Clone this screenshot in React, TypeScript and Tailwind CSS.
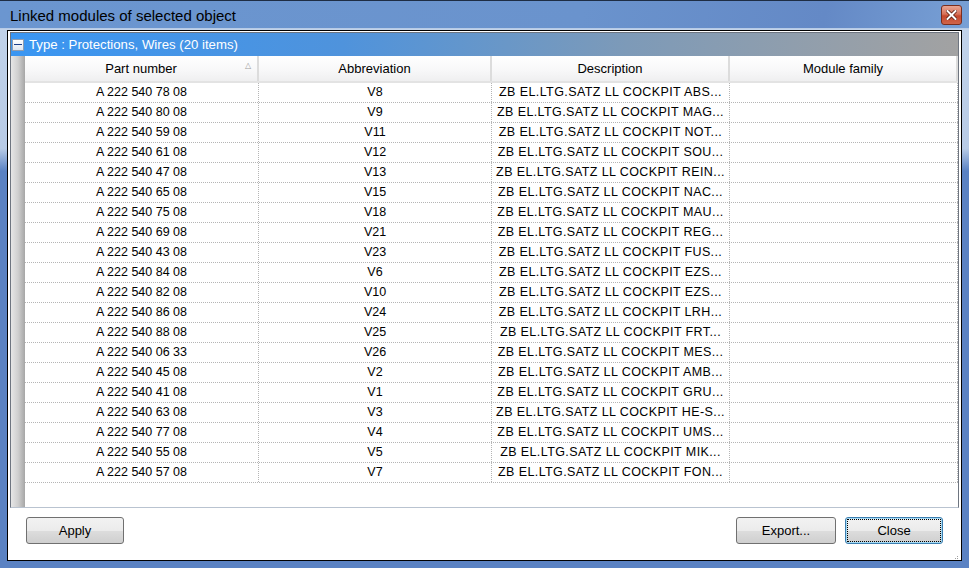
import React from "react";

type Row = { part: string; abbr: string; desc: string };

const rows: Row[] = [
  { part: "A 222 540 78 08", abbr: "V8", desc: "ABS..." },
  { part: "A 222 540 80 08", abbr: "V9", desc: "MAG..." },
  { part: "A 222 540 59 08", abbr: "V11", desc: "NOT..." },
  { part: "A 222 540 61 08", abbr: "V12", desc: "SOU..." },
  { part: "A 222 540 47 08", abbr: "V13", desc: "REIN..." },
  { part: "A 222 540 65 08", abbr: "V15", desc: "NAC..." },
  { part: "A 222 540 75 08", abbr: "V18", desc: "MAU..." },
  { part: "A 222 540 69 08", abbr: "V21", desc: "REG..." },
  { part: "A 222 540 43 08", abbr: "V23", desc: "FUS..." },
  { part: "A 222 540 84 08", abbr: "V6", desc: "EZS..." },
  { part: "A 222 540 82 08", abbr: "V10", desc: "EZS..." },
  { part: "A 222 540 86 08", abbr: "V24", desc: "LRH..." },
  { part: "A 222 540 88 08", abbr: "V25", desc: "FRT..." },
  { part: "A 222 540 06 33", abbr: "V26", desc: "MES..." },
  { part: "A 222 540 45 08", abbr: "V2", desc: "AMB..." },
  { part: "A 222 540 41 08", abbr: "V1", desc: "GRU..." },
  { part: "A 222 540 63 08", abbr: "V3", desc: "HE-S..." },
  { part: "A 222 540 77 08", abbr: "V4", desc: "UMS..." },
  { part: "A 222 540 55 08", abbr: "V5", desc: "MIK..." },
  { part: "A 222 540 57 08", abbr: "V7", desc: "FON..." },
];

const cols = "grid grid-cols-[234px_233px_238px_228px]";

function Button({ label, focused, width }: { label: string; focused?: boolean; width: string }) {
  return (
    <div
      className={`${width} h-[27px] rounded-[3px] border ${
        focused ? "border-[#3c7fb1] shadow-[inset_0_0_0_1px_#a6dbf5]" : "border-[#707070]"
      } bg-[linear-gradient(#f2f2f2_0%,#ebebeb_50%,#dddddd_51%,#cfcfcf_100%)] p-[2px]`}
    >
      <div
        className={`h-full w-full flex items-center justify-center text-[13px] text-black ${
          focused ? "outline outline-1 outline-dotted outline-black" : ""
        }`}
      >
        {label}
      </div>
    </div>
  );
}

export default function App() {
  return (
    <div
      className="w-[969px] h-[568px] flex flex-col border-t border-[#1e2d44] bg-[linear-gradient(#c3d4ea_0%,#b8cbe6_26%,#5a82c3_30%,#5a82c3_100%)] overflow-hidden"
      style={{ fontFamily: '"Liberation Sans", Arial, sans-serif' }}
    >
      {/* title bar */}
      <div className="h-[28px] shrink-0 flex items-center justify-between pl-[10px] pr-[7px] bg-[linear-gradient(100deg,#6b96d0_0%,#6a93cd_60%,#6489c6_85%,#78a0d5_100%)] border-b border-[#b7cbe6]">
        <span className="text-[15px] text-black leading-none pt-[2px]">Linked modules of selected object</span>
        <div className="w-[21px] h-[20px] rounded-[3px] border border-[#7a2e1e] bg-[linear-gradient(#e8a593_0%,#d8735a_45%,#c5472c_55%,#d0654a_100%)] flex items-center justify-center">
          <svg width="11" height="10" viewBox="0 0 11 10">
            <path d="M1.5 1 L9.5 9 M9.5 1 L1.5 9" stroke="#5a1d10" strokeWidth="3.6" strokeLinecap="square" />
            <path d="M1.5 1 L9.5 9 M9.5 1 L1.5 9" stroke="#ffffff" strokeWidth="2" strokeLinecap="square" />
          </svg>
        </div>
      </div>

      {/* client area */}
      <div className="mx-[7px] mt-[1px] h-[531px] border border-black bg-white flex flex-col px-[2px] pt-[1px]">
        {/* grid */}
        <div className="h-[476px] border border-[#6e7580] border-b-[#b9c3d0] flex flex-col">
          <div className="h-[23px] shrink-0 flex items-center gap-[5px] pl-[1px] bg-[linear-gradient(90deg,#3a96f2_0%,#4f93dc_35%,#7d9ab8_65%,#a2a2a2_100%)]">
            <div className="w-[12px] h-[12px] border border-[#8f9db0] bg-[linear-gradient(#ffffff,#dfe6ef)] flex items-center justify-center">
              <div className="w-[8px] h-[1px] bg-[#1d3f8a]" />
            </div>
            <span className="text-[13.2px] text-white leading-none">Type : Protections, Wires (20 items)</span>
          </div>

          <div className="flex flex-1 min-h-0">
            <div className="w-[14px] shrink-0 bg-[linear-gradient(90deg,#e6e6e6_0%,#cfcfcf_50%,#a6a6a6_100%)]" />
            <div className="flex-1 flex flex-col">
              {/* column header */}
              <div className={`${cols} h-[27px] shrink-0 border-b-2 border-[#e3e3e3] bg-[linear-gradient(#ffffff_0%,#f7f7f8_60%,#efeff0_100%)] text-[13px] text-black`}>
                <div className="relative flex items-center justify-center border-r-2 border-[#dcdcdc]">
                  Part number
                  <span className="absolute right-[6px] top-[4px] text-[8px] text-[#9a9a9a]">△</span>
                </div>
                <div className="flex items-center justify-center border-r-2 border-[#dcdcdc]">Abbreviation</div>
                <div className="flex items-center justify-center border-r-2 border-[#dcdcdc]">Description</div>
                <div className="flex items-center justify-center border-r-2 border-[#dcdcdc]">Module family</div>
              </div>

              {rows.map((r) => (
                <div key={r.part} className={`${cols} h-[20px] shrink-0 border-b border-dotted border-[#b5b5b5] text-[12.5px] text-black`}>
                  <div className="flex items-center justify-center border-r border-dotted border-[#b5b5b5]">{r.part}</div>
                  <div className="flex items-center justify-center border-r border-dotted border-[#b5b5b5]">{r.abbr}</div>
                  <div className="flex items-center justify-center border-r border-dotted border-[#b5b5b5] whitespace-nowrap tracking-[0.4px]">
                    ZB EL.LTG.SATZ LL COCKPIT {r.desc}
                  </div>
                  <div className="border-r border-dotted border-[#b5b5b5]" />
                </div>
              ))}
            </div>
          </div>
        </div>

        {/* buttons */}
        <div className="flex items-center justify-between pl-[16px] pr-[16px] pt-[9px]">
          <Button label="Apply" width="w-[98px]" />
          <div className="flex gap-[9px]">
            <Button label="Export..." width="w-[100px]" />
            <Button label="Close" width="w-[98px]" focused />
          </div>
        </div>
        <div className="flex-1 flex items-end justify-end pr-[1px] pb-[1px]">
          <div className="grid grid-cols-3 gap-[1px]">
            <span />
            <span />
            <span className="w-[1px] h-[1px] bg-[#a0a0a0]" />
            <span />
            <span className="w-[1px] h-[1px] bg-[#a0a0a0]" />
            <span className="w-[1px] h-[1px] bg-[#a0a0a0]" />
          </div>
        </div>
      </div>
    </div>
  );
}
